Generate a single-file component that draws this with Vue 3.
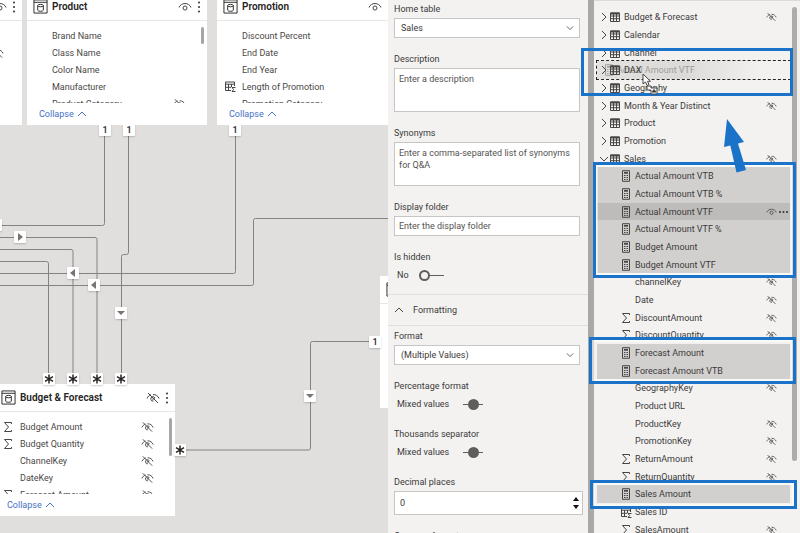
<script setup>
import { ref } from 'vue'

const cards = [
  { id: 'left', title: '', rows: [{ text: '' }, { text: '', hidden: true }] },
  {
    id: 'product', title: 'Product', thumb: 'short',
    rows: [
      { text: 'Brand Name' }, { text: 'Class Name' }, { text: 'Color Name' },
      { text: 'Manufacturer' }, { text: 'Product Category', hidden: true },
    ],
  },
  {
    id: 'promotion', title: 'Promotion',
    rows: [
      { text: 'Discount Percent' }, { text: 'End Date' }, { text: 'End Year' },
      { text: 'Length of Promotion', icon: 'calc-column' }, { text: 'Promotion Category' },
    ],
  },
  {
    id: 'budget', title: 'Budget & Forecast', hidden: true, thumb: 'long',
    rows: [
      { text: 'Budget Amount', icon: 'sigma', hidden: true },
      { text: 'Budget Quantity', icon: 'sigma', hidden: true },
      { text: 'ChannelKey', hidden: true },
      { text: 'DateKey', hidden: true },
      { text: 'Forecast Amount', icon: 'sigma', hidden: true },
    ],
  },
  { id: 'right', title: '', rows: [] },
]

const links = [
  'M104.5 136V223.5Q104.500 225.500 102.500 225.500H0',
  'M128.500 136V252Q128.500 254.500 126.500 254.500H123.500Q121.500 254.500 121.500 256.500V374',
  'M0 237.500H95Q97 237.500 97 239.500V374',
  'M0 249.500H71Q73 249.500 73 251.500V374',
  'M0 261.500H46.500Q48.500 261.500 48.500 263.500V374',
  'M0 273.500H233.500Q235.500 273.500 235.500 271.500V136',
  'M0 285.500H251.500Q253.500 285.500 253.500 283.500V220.500Q253.500 218.500 255.500 218.500H400',
  'M370 341.500H312.500Q310.500 341.500 310.500 343.500V448Q310.500 450 308.500 450H184',
]

const badges = [
  { x: 105, y: 130, kind: '1' }, { x: 129, y: 130, kind: '1' },
  { x: 235, y: 130, kind: '1' }, { x: 375, y: 342, kind: '1' },
  { x: 49, y: 379, kind: 'star' }, { x: 73, y: 379, kind: 'star' },
  { x: 97, y: 379, kind: 'star' }, { x: 121, y: 379, kind: 'star' },
  { x: 180, y: 450, kind: 'star' },
  { x: 20, y: 237, kind: 'right' }, { x: 73, y: 273, kind: 'left' },
  { x: 94, y: 285, kind: 'left' }, { x: 121, y: 313, kind: 'down' },
  { x: 310, y: 396, kind: 'down' }, { x: -4, y: 225, kind: 'blank' },
]
const shapes = {
  right: 'M4 2L9 6L4 10Z',
  left: 'M8 2L3 6L8 10Z',
  down: 'M2 4H10L6 8Z',
}

const fields = [
  { text: 'Budget & Forecast', table: true, eye: 'hidden' },
  { text: 'Calendar', table: true },
  { text: 'Channel', table: true },
  { text: 'DAX', table: true, drop: true },
  { text: 'Geography', table: true },
  { text: 'Month & Year Distinct', table: true, eye: 'hidden' },
  { text: 'Product', table: true },
  { text: 'Promotion', table: true },
  { text: 'Sales', table: true, open: true, eye: 'hidden' },
  { text: 'Actual Amount VTB', icon: 'measure', selected: true },
  { text: 'Actual Amount VTB %', icon: 'measure', selected: true },
  { text: 'Actual Amount VTF', icon: 'measure', selected: true, active: true, eye: 'shown' },
  { text: 'Actual Amount VTF %', icon: 'measure', selected: true },
  { text: 'Budget Amount', icon: 'measure', selected: true },
  { text: 'Budget Amount VTF', icon: 'measure', selected: true },
  { text: 'channelKey', eye: 'hidden' },
  { text: 'Date', eye: 'hidden' },
  { text: 'DiscountAmount', icon: 'sigma', eye: 'hidden' },
  { text: 'DiscountQuantity', icon: 'sigma', eye: 'hidden' },
  { text: 'Forecast Amount', icon: 'measure', selected: true },
  { text: 'Forecast Amount VTB', icon: 'measure', selected: true },
  { text: 'GeographyKey', eye: 'hidden' },
  { text: 'Product URL' },
  { text: 'ProductKey', eye: 'hidden' },
  { text: 'PromotionKey', eye: 'hidden' },
  { text: 'ReturnAmount', icon: 'sigma', eye: 'hidden' },
  { text: 'ReturnQuantity', icon: 'sigma', eye: 'hidden' },
  { text: 'Sales Amount', icon: 'measure', selected: true },
  { text: 'Sales ID', icon: 'calc-column' },
  { text: 'SalesAmount', icon: 'sigma', eye: 'hidden' },
]

const decimals = ref(0)
const isHidden = ref(false)
</script>

<template>
  <div class="app">
    <svg class="sprite" aria-hidden="true">
      <symbol id="eye-shown" viewBox="0 0 14 12">
        <path d="M1 6.500C3 1.200 11 1.200 13 6.500" />
        <circle cx="7" cy="7" r="2" />
      </symbol>
      <symbol id="eye-hidden" viewBox="0 0 14 12">
        <path d="M1 6.500C2 4.300 3.300 3.200 5 2.700M7 2.500C10 2.500 12 4 13 6.500M2 1L12 11M9 6A2.200 2.200 0 1 0 7.500 9" />
        <path d="M6.300 7.300L8.700 6.500" />
      </symbol>
      <symbol id="sigma" viewBox="0 0 10 12">
        <path d="M8.500 3V1.500H1.500L5.500 6L1.500 10.500H8.500V9" />
      </symbol>
      <symbol id="measure" viewBox="0 0 10 12">
        <path d="M1.500 .7H8.500V11.300H1.500Z" />
        <path d="M3 2.800H7" stroke-width="1.800" />
        <path d="M3 5.500H7M3 7.500H7M3 9.500H7" stroke-dasharray="1 .5" />
      </symbol>
      <symbol id="table" viewBox="0 0 10 10">
        <path d="M.5 1H9.500V9.500H.5ZM.5 4H9.500M.5 6.700H9.500M3.500 1V9.500M6.500 1V9.500" />
        <path d="M.5 1.500H9.500" stroke-width="2" />
      </symbol>
      <symbol id="calc-column" viewBox="0 0 11 11">
        <path d="M6 9.500H.5V1H9.500V5M.5 3.200H9.500M.5 6.300H6M3.500 3V9.500M6.500 3V6" />
        <path d="M10.500 6.500H7L8.600 8.500L7 10.500H10.500" />
      </symbol>
      <symbol id="entity" viewBox="0 0 16 16">
        <path d="M1 1H15V15H1ZM1 3.500H15" />
        <path d="M5 7V12C5 13.500 11 13.500 11 12V7" />
        <ellipse cx="8" cy="7" rx="3" ry="1.300" />
      </symbol>
      <symbol id="chevron-up" viewBox="0 0 10 6"><path d="M1 5L5 1L9 5" /></symbol>
      <symbol id="chevron-down" viewBox="0 0 10 6"><path d="M1 1L5 5L9 1" /></symbol>
      <symbol id="chevron-right" viewBox="0 0 6 10"><path d="M1 1L5 5L1 9" /></symbol>
    </svg>

    <main class="canvas">
      <svg class="links" aria-hidden="true">
        <path v-for="d in links" :key="d" :d="d" />
      </svg>
      <section v-for="card in cards" :key="card.id" class="card" :class="card.id">
        <header>
          <svg class="entity"><use href="#entity" /></svg>
          <h2>{{ card.title }}</h2>
          <button class="icon-button" aria-label="Visibility">
            <svg class="eye"><use :href="card.hidden ? '#eye-hidden' : '#eye-shown'" /></svg>
          </button>
          <button class="icon-button" aria-label="More options">
            <svg class="more" viewBox="0 0 2 12">
              <circle cx="1" cy="1.500" r="1" /><circle cx="1" cy="6" r="1" /><circle cx="1" cy="10.500" r="1" />
            </svg>
          </button>
        </header>
        <div class="body">
          <ul>
            <li v-for="(row, i) in card.rows" :key="i">
              <span class="slot"><svg v-if="row.icon" :class="row.icon"><use :href="'#' + row.icon" /></svg></span>
              <span class="name">{{ row.text }}</span>
              <svg v-if="row.hidden" class="eye"><use href="#eye-hidden" /></svg>
            </li>
          </ul>
          <span v-if="card.thumb" class="thumb" :class="card.thumb"></span>
        </div>
        <button v-if="card.title" class="collapse">
          Collapse <svg class="chevron"><use href="#chevron-up" /></svg>
        </button>
      </section>
      <span
        v-for="(b, i) in badges" :key="i" class="badge"
        :style="{ left: b.x + 'px', top: b.y + 'px' }"
      >
        <template v-if="b.kind === '1'">1</template>
        <svg v-else-if="b.kind === 'star'" class="star" viewBox="0 0 12 12">
          <path d="M6 1.500V10.500M2 3.700L10 8.300M10 3.700L2 8.300" />
        </svg>
        <svg v-else-if="shapes[b.kind]" class="pointer" viewBox="0 0 12 12"><path :d="shapes[b.kind]" /></svg>
      </span>
    </main>

    <form class="properties" @submit.prevent>
      <div class="group">
        <div class="field">
          <label for="home">Home table</label>
          <div class="select">
            <select id="home"><option>Sales</option></select>
            <svg class="chevron"><use href="#chevron-down" /></svg>
          </div>
        </div>
        <div class="field">
          <label for="description">Description</label>
          <textarea id="description" placeholder="Enter a description"></textarea>
        </div>
        <div class="field">
          <label for="synonyms">Synonyms</label>
          <textarea id="synonyms" placeholder="Enter a comma-separated list of synonyms for Q&amp;A"></textarea>
        </div>
        <div class="field">
          <label for="folder">Display folder</label>
          <input id="folder" type="text" placeholder="Enter the display folder">
        </div>
        <div class="field">
          <label for="hidden">Is hidden</label>
          <div class="toggle-row">
            <span>No</span><input id="hidden" v-model="isHidden" class="toggle" type="checkbox">
          </div>
        </div>
      </div>
      <button type="button" class="section-title">
        <svg class="chevron"><use href="#chevron-up" /></svg>Formatting
      </button>
      <div class="group formatting">
        <div class="field">
          <label for="format">Format</label>
          <div class="select">
            <select id="format"><option>(Multiple Values)</option></select>
            <svg class="chevron"><use href="#chevron-down" /></svg>
          </div>
        </div>
        <div class="field">
          <label for="percentage">Percentage format</label>
          <div class="toggle-row mixed">
            <span>Mixed values</span><input id="percentage" class="toggle" type="checkbox">
          </div>
        </div>
        <div class="field">
          <label for="thousands">Thousands separator</label>
          <div class="toggle-row mixed">
            <span>Mixed values</span><input id="thousands" class="toggle" type="checkbox">
          </div>
        </div>
        <div class="field">
          <label for="decimals">Decimal places</label>
          <div class="stepper">
            <input id="decimals" v-model="decimals" type="number">
            <div class="steps">
              <button type="button" aria-label="Increase" @click="decimals++">
                <svg viewBox="0 0 6 4"><path d="M0 4L3 0L6 4Z" /></svg>
              </button>
              <button type="button" aria-label="Decrease" @click="decimals--">
                <svg viewBox="0 0 6 4"><path d="M0 0L3 4L6 0Z" /></svg>
              </button>
            </div>
          </div>
        </div>
        <div class="field"><span class="label">Currency format</span></div>
      </div>
    </form>

    <aside class="fields">
      <ul class="tree">
        <li
          v-for="f in fields" :key="f.text"
          :class="{ child: !f.table, selected: f.selected, active: f.active, drop: f.drop }"
        >
          <button v-if="f.table" class="icon-button twisty" aria-label="Toggle table">
            <svg :class="f.open ? 'chevron' : 'chevron-right'">
              <use :href="f.open ? '#chevron-down' : '#chevron-right'" />
            </svg>
          </button>
          <span class="slot">
            <svg v-if="f.table" class="table"><use href="#table" /></svg>
            <svg v-else-if="f.icon" :class="f.icon"><use :href="'#' + f.icon" /></svg>
          </span>
          <span class="name">{{ f.text }}</span>
          <svg v-if="f.eye" class="eye"><use :href="'#eye-' + f.eye" /></svg>
          <span class="dots">
            <svg v-if="f.active" class="ellipsis" viewBox="0 0 9 2">
              <circle cx="1" cy="1" r="1" /><circle cx="4.500" cy="1" r="1" /><circle cx="8" cy="1" r="1" />
            </svg>
          </span>
          <span v-if="f.drop" class="ghost">
            <svg class="measure"><use href="#measure" /></svg>Actual Amount VTF
          </span>
        </li>
      </ul>
      <span class="scrollbar"></span>
      <span class="mark drop-target"></span>
      <span class="mark inner actuals"></span>
      <span class="mark inner forecasts"></span>
      <span class="mark inner sales"></span>
      <svg class="arrow" viewBox="0 0 22 54" aria-hidden="true">
        <path d="M4 0L21 23L15 24.500L23 51L13.500 53.500L7.300 26.500L1 28Z" />
      </svg>
      <svg class="cursor" viewBox="0 0 18 24" aria-hidden="true">
        <path class="hand" d="M1 1V11L3.500 9L5 12.500L7 11.600L5.500 8.300H8.500Z" />
        <path class="plate" d="M5 13H9V15H15V21H9V17H5Z" />
        <path class="mark-in" d="M10 19L12 16.500L14 19Z" />
      </svg>
    </aside>
  </div>
</template>

<style>
body { margin: 0; }
</style>

<style scoped>
*, *::before { box-sizing: border-box; }
.app {
  display: grid;
  grid-template-columns: minmax(0, 1fr) 200px 212px;
  height: 100vh;
  overflow: hidden;
  background: #f3f2f1;
  color: #3b3a39;
  font: 9px/12px Roboto, "Open Sans", sans-serif;
}
.sprite { position: absolute; width: 0; height: 0; }
svg { fill: none; stroke: #484644; stroke-width: 1; flex: none; display: block; }
ul { list-style: none; margin: 0; padding: 0; }
button { border: 0; padding: 0; background: none; color: inherit; font: inherit; text-align: left; }
.icon-button { display: grid; place-items: center; }
.eye { width: 12px; height: 10px; }
.sigma { width: 10px; height: 12px; }
.measure { width: 10px; height: 12px; }
.table { width: 10px; height: 10px; }
.calc-column { width: 11px; height: 11px; }
.chevron { width: 10px; height: 6px; }
.chevron-right { width: 6px; height: 10px; }
.name { flex: 1; white-space: nowrap; }

/* Model canvas */
.canvas { position: relative; overflow: hidden; background: #e1dfdd; }
.links { position: absolute; inset: 0; width: 100%; height: 100%; stroke: #858381; }
.card { position: absolute; width: 180px; height: 132px; background: #fff; display: flex; flex-direction: column; }
.card.left { left: -158px; top: -7px; }
.card.product { left: 27px; top: -7px; }
.card.promotion { left: 217px; top: -7px; }
.card.budget { left: -5px; top: 384px; }
.card.right { left: 380px; top: 276px; }
.card header {
  display: flex; align-items: center; height: 28px; flex: none;
  padding: 0 7px 0 6px; border-bottom: 1px solid #e8e6e4;
}
.card h2 { flex: 1; margin: 0 0 0 4px; font-size: 10px; font-weight: 600; color: #252423; white-space: nowrap; }
.entity { width: 15px; height: 15px; stroke: #252423; }
.card header .eye { width: 14px; height: 12px; }
.card header .icon-button + .icon-button { margin-left: 6px; }
.more { width: 2px; height: 12px; fill: #323130; stroke: none; }
.card .body { display: flex; flex: 1; min-height: 0; overflow: hidden; padding: 6px 3px 0 8px; }
.card ul { flex: 1; }
.card li { display: flex; align-items: center; height: 17px; padding-right: 15px; color: #4a4846; }
.card .slot { width: 17px; }
.card li .eye { width: 13px; height: 12px; }
.thumb { width: 3px; border-radius: 2px; background: #a8a6a4; }
.thumb.short { height: 17px; }
.thumb.long { height: 38px; }
.collapse { display: flex; align-items: center; gap: 3px; height: 22px; flex: none; padding-left: 12px; color: #4472c4; }
.collapse .chevron { stroke: #4472c4; }
.badge {
  position: absolute; display: grid; place-items: center; width: 12px; height: 12px;
  transform: translate(-50%, -50%); background: #fff; border-radius: 1px;
  box-shadow: 0 1px 2px #0003; color: #323130; font-weight: 600;
}
.badge svg { width: 12px; height: 12px; }
.badge .star { stroke: #252423; stroke-width: 1.5; }
.badge .pointer { fill: #777573; stroke: none; }

/* Properties */
.properties { overflow: hidden; color: #3b3a39; }
.group { display: flex; flex-direction: column; gap: 15px; padding: 3px 8px 10px 6px; }
.formatting { padding-top: 4px; }
.field { display: flex; flex-direction: column; gap: 3px; }
.select { display: grid; grid-template-columns: 1fr 14px; align-items: center; }
.select select { grid-area: 1 / 1 / 2 / 3; appearance: none; }
.select .chevron { grid-area: 1 / 2; width: 8px; }
input, select, textarea {
  margin: 0; border: 1px solid #c8c6c4; border-radius: 0; background: #fff;
  color: #3b3a39; font: inherit; outline: 0;
}
select, input[type="text"] { height: 20px; width: 100%; }
select { padding: 0 6px; }
input[type="text"] { padding: 0 4px; }
textarea { display: block; height: 44px; width: 100%; padding: 4px; resize: none; overflow: hidden; }
::placeholder { color: #55524f; opacity: 1; }
.toggle-row { display: flex; align-items: center; gap: 10px; height: 18px; padding-left: 3px; }
.toggle-row.mixed { gap: 14px; }
.toggle {
  position: relative; appearance: none; width: 25px; height: 11px; border: 0;
  background: linear-gradient(#605e5c, #605e5c) center / 100% 1px no-repeat;
}
.toggle::before {
  content: ""; position: absolute; left: 0; top: 0; width: 11px; height: 11px;
  border: 2px solid #605e5c; border-radius: 50%; background: #f3f2f1;
}
.toggle:checked::before { left: 14px; }
.mixed .toggle { width: 20px; }
.mixed .toggle::before { left: 5px; background: #605e5c; }
.section-title {
  display: flex; align-items: center; gap: 9px; width: 100%; height: 32px; padding-left: 6px;
  border: solid #e1dfdd; border-width: 1px 0;
}
.stepper { display: flex; height: 24px; margin-right: -3px; border: 1px solid #c8c6c4; background: #fff; }
.stepper input { flex: 1; min-width: 0; border: 0; padding: 0 5px; appearance: textfield; }
.stepper input::-webkit-inner-spin-button { display: none; }
.steps { display: flex; flex-direction: column; justify-content: space-evenly; padding-right: 3px; }
.steps svg { width: 6px; height: 4px; fill: #111; stroke: none; }

/* Fields */
.fields { position: relative; min-height: 0; border-left: 6px solid #a9a8a7; }
.tree { height: 100%; overflow: hidden; padding: 7px 10px 0 3px; border-top: 1px solid #dddbd9; }
.tree li { position: relative; display: flex; align-items: center; height: 18px; padding-left: 2px; }
.tree li:nth-child(3n) { height: 17px; }
.tree .twisty { width: 10px; }
.tree .slot { width: 13px; margin: 0 1px; }
.tree .child { padding-left: 23px; }
.tree .selected { background: #d2d0ce; }
.tree .active { background: #bebcba; }
.tree .eye { width: 11px; height: 10px; }
.dots { display: grid; place-items: center; width: 13px; }
.ellipsis { width: 9px; height: 2px; fill: #323130; stroke: none; }
.tree .drop { outline: 1px dashed #252423; background: linear-gradient(90deg, #e4e2e0, #dcdad8 45%, #f3f2f1 85%); }
.ghost {
  position: absolute; left: 7px; top: 3px; display: flex; gap: 3px; opacity: .4; white-space: nowrap;
}
.scrollbar { position: absolute; right: 3px; top: 7px; bottom: 72px; width: 5px; border-radius: 3px; background: #aeacab; }
.mark { position: absolute; border: 3px solid #1b73c9; }
.mark.inner { box-shadow: inset 0 0 0 2px #ffffff80; }
.drop-target { left: -13px; right: 7px; top: 48px; height: 48px; }
.actuals { left: -1px; right: 4px; top: 162px; height: 116px; }
.forecasts { left: -5px; right: 4px; top: 337px; height: 47px; }
.sales { left: -4px; right: 3px; top: 480px; height: 29px; }
.arrow { position: absolute; left: 129px; top: 119px; width: 22px; height: 54px; fill: #1b73c9; stroke: none; overflow: visible; }
.cursor { position: absolute; left: 48px; top: 73px; width: 18px; height: 24px; fill: #fff; }
.mark-in { fill: #252423; }
</style>
